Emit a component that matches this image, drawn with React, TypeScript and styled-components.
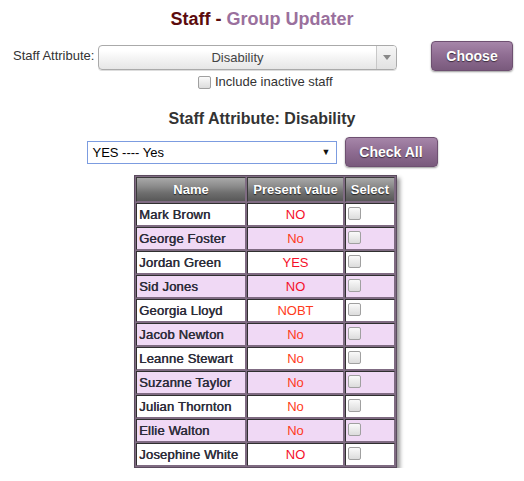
import React from 'react';
import styled, { createGlobalStyle } from 'styled-components';

const GlobalStyle = createGlobalStyle`
  body {
    margin: 0;
    background: #fff;
    font-family: "Liberation Sans", Arial, sans-serif;
  }
`;

const Page = styled.div`
  width: 524px;
  padding-top: 8px;
  color: #333;
`;

const Title = styled.h2`
  margin: 0;
  text-align: center;
  font-size: 18px;
  line-height: 22px;
  font-weight: bold;
  color: #5c0b0d;
`;

const TitleAccent = styled.span`
  color: #9a709d;
`;

const AttributeRow = styled.div`
  display: flex;
  align-items: flex-start;
  margin-top: 11px;
  padding-left: 13px;
`;

const Label = styled.span`
  font-size: 13px;
  line-height: 16px;
  margin-top: 7px;
  color: #333;
  width: 85px;
`;

const ChosenBox = styled.div`
  box-sizing: border-box;
  width: 299px;
  height: 25px;
  margin-top: 4px;
  display: flex;
  border: 1px solid #aaa;
  border-radius: 4px;
  background: linear-gradient(#fff 20%, #f2f2f2 60%, #e6e6e6);
  box-shadow: 0 1px 0 #ddd;
  overflow: hidden;
`;

const ChosenText = styled.span`
  flex: 1;
  text-align: center;
  font-size: 13px;
  line-height: 23px;
  color: #444;
`;

const ChosenArrow = styled.span`
  width: 19px;
  border-left: 1px solid #c8c8c8;
  display: flex;
  align-items: center;
  justify-content: center;
  background: linear-gradient(#f6f6f6, #e2e2e2);

  &::after {
    content: '';
    border-left: 4px solid transparent;
    border-right: 4px solid transparent;
    border-top: 5px solid #888;
  }
`;

const Button = styled.button<{ $width: number }>`
  box-sizing: border-box;
  width: ${p => p.$width}px;
  height: 30px;
  padding: 0;
  border: 1px solid #6e5071;
  border-radius: 4px;
  background: linear-gradient(#a686a9, #8e6c91 50%, #795a7c);
  color: #fff;
  font-family: "Liberation Sans", Arial, sans-serif;
  font-size: 14px;
  font-weight: bold;
  text-shadow: 0 1px 1px #3a2a3b;
  box-shadow: 0 1px 2px #999;
  cursor: pointer;
`;

const ChooseButton = styled(Button)`
  margin-left: 34px;
`;

const InactiveRow = styled.label`
  display: flex;
  align-items: center;
  gap: 4px;
  margin-top: 3px;
  padding-left: 198px;
  font-size: 13px;
  line-height: 16px;
  color: #333;
`;

const Box = styled.span`
  box-sizing: border-box;
  display: inline-block;
  width: 13px;
  height: 13px;
  border: 1px solid #a0a0a0;
  border-radius: 2px;
  background: linear-gradient(#fafafa, #dcdcdc);
`;

const SubTitle = styled.h3`
  margin: 19px 0 0;
  text-align: center;
  font-size: 16px;
  line-height: 20px;
  font-weight: bold;
  color: #333;
`;

const ValueRow = styled.div`
  display: flex;
  justify-content: center;
  align-items: center;
  gap: 8px;
  margin-top: 8px;
`;

const NativeSelect = styled.div`
  box-sizing: border-box;
  width: 250px;
  height: 23px;
  display: flex;
  align-items: center;
  justify-content: space-between;
  padding: 0 5px 0 5px;
  border: 1px solid #7c9ce0;
  background: #fff;
  font-size: 13px;
  color: #000;
`;

const SelectCaret = styled.span`
  font-size: 9px;
  color: #111;
`;

const TableWrap = styled.div`
  display: flex;
  justify-content: center;
  padding-left: 7px;
  margin-top: 8px;
`;

const Table = styled.table`
  border-collapse: separate;
  border-spacing: 1px;
  border: 1px solid #5b4b5e;
  background: #7f6b82;
  box-shadow: 3px 3px 4px #999;
  font-size: 13px;
`;

const HeadCell = styled.th<{ $width: number }>`
  box-sizing: border-box;
  width: ${p => p.$width}px;
  height: 25px;
  padding: 0 2px;
  border-top: 1px solid #3a3a3a;
  border-left: 1px solid #3a3a3a;
  border-right: 1px solid #7f6b82;
  border-bottom: 1px solid #7f6b82;
  background: linear-gradient(#a8a8a8, #8c8c8c 35%, #6e6e6e 65%, #585858);
  color: #fff;
  font-weight: bold;
  text-shadow: 0 1px 1px #222;
  white-space: nowrap;
`;

const Cell = styled.td<{ $alt: boolean; $align?: string }>`
  box-sizing: border-box;
  height: 23px;
  padding: 0 2px;
  border-top: 1px solid #2f2f2f;
  border-left: 1px solid #2f2f2f;
  border-right: 1px solid #7f6b82;
  border-bottom: 1px solid #7f6b82;
  background: ${p => (p.$alt ? '#f0d9f5' : '#fff')};
  text-align: ${p => p.$align || 'left'};
  white-space: nowrap;
  vertical-align: middle;
`;

const NameText = styled.span`
  color: #2b2b38;
  letter-spacing: 0.2px;
  text-shadow: 0.5px 0 0 #2b2b38;
`;

const ValueText = styled.span<{ $tone: string }>`
  color: ${p => p.$tone};
`;

const SelectBox = styled(Box)`
  display: block;
  margin-top: -3px;
`;

const rows = [
  { name: 'Mark Brown', value: 'NO' },
  { name: 'George Foster', value: 'No' },
  { name: 'Jordan Green', value: 'YES' },
  { name: 'Sid Jones', value: 'NO' },
  { name: 'Georgia Lloyd', value: 'NOBT' },
  { name: 'Jacob Newton', value: 'No' },
  { name: 'Leanne Stewart', value: 'No' },
  { name: 'Suzanne Taylor', value: 'No' },
  { name: 'Julian Thornton', value: 'No' },
  { name: 'Ellie Walton', value: 'No' },
  { name: 'Josephine White', value: 'NO' },
];

const toneFor = (v: string) => (v === 'NO' || v === 'YES' ? '#f5102a' : '#ff3a1a');

const App: React.FC = () => {
  return (
    <Page>
      <GlobalStyle />
      <Title>
        Staff - <TitleAccent>Group Updater</TitleAccent>
      </Title>

      <AttributeRow>
        <Label>Staff Attribute:</Label>
        <ChosenBox>
          <ChosenText>Disability</ChosenText>
          <ChosenArrow />
        </ChosenBox>
        <ChooseButton $width={82}>Choose</ChooseButton>
      </AttributeRow>

      <InactiveRow>
        <Box />
        Include inactive staff
      </InactiveRow>

      <SubTitle>Staff Attribute: Disability</SubTitle>

      <ValueRow>
        <NativeSelect>
          <span>YES ---- Yes</span>
          <SelectCaret>▼</SelectCaret>
        </NativeSelect>
        <Button $width={93}>Check All</Button>
      </ValueRow>

      <TableWrap>
        <Table>
          <thead>
            <tr>
              <HeadCell $width={110}>Name</HeadCell>
              <HeadCell $width={97}>Present value</HeadCell>
              <HeadCell $width={50}>Select</HeadCell>
            </tr>
          </thead>
          <tbody>
            {rows.map((r, i) => (
              <tr key={r.name}>
                <Cell $alt={i % 2 === 1}>
                  <NameText>{r.name}</NameText>
                </Cell>
                <Cell $alt={i % 2 === 1} $align="center">
                  <ValueText $tone={toneFor(r.value)}>{r.value}</ValueText>
                </Cell>
                <Cell $alt={i % 2 === 1}>
                  <SelectBox />
                </Cell>
              </tr>
            ))}
          </tbody>
        </Table>
      </TableWrap>
    </Page>
  );
};

export default App;
